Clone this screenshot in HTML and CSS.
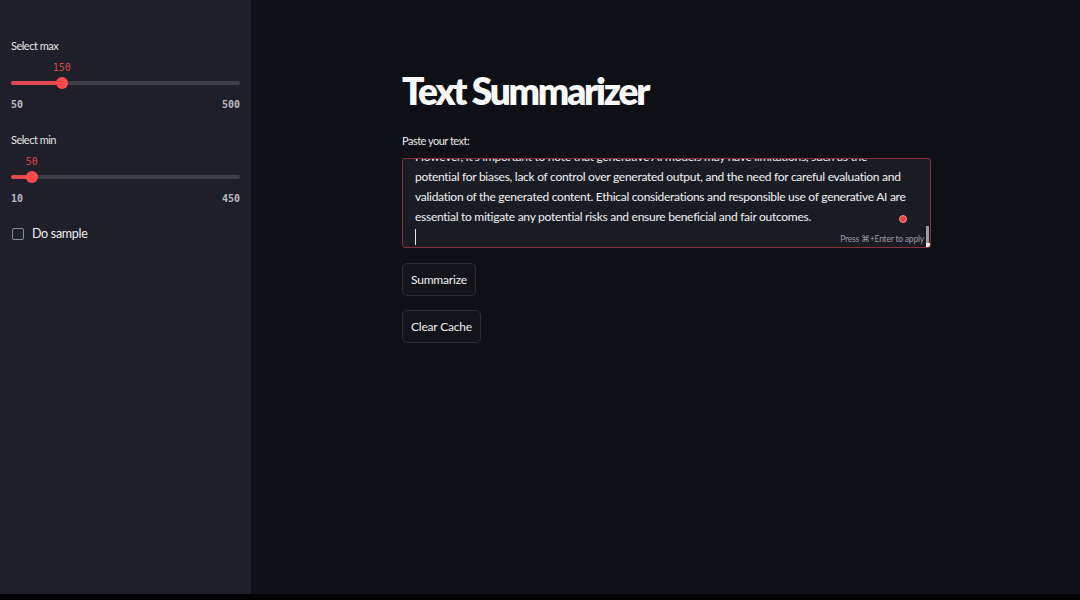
FILE: index.html
```html
<!DOCTYPE html>
<html>
<head>
<meta charset="utf-8">
<link rel="stylesheet" href="styles.css">
</head>
<body>
<div class="app">
  <aside class="sidebar">
    <div class="slider-block">
      <div class="label">Select max</div>
      <div class="slider">
        <div class="track"><div class="fill" style="width:22.2%"></div></div>
        <div class="thumb" style="left:22.2%"><span class="val">150</span></div>
      </div>
      <div class="range"><span>50</span><span>500</span></div>
    </div>
    <div class="slider-block">
      <div class="label">Select min</div>
      <div class="slider">
        <div class="track"><div class="fill" style="width:9.1%"></div></div>
        <div class="thumb" style="left:9.1%"><span class="val">50</span></div>
      </div>
      <div class="range"><span>10</span><span>450</span></div>
    </div>
    <label class="check"><span class="box"></span><span>Do sample</span></label>
  </aside>
  <main class="main">
    <div class="content">
      <h1 class="title">Text Summarizer</h1>
      <div class="label main-label">Paste your text:</div>
      <div class="textarea">
        <div class="text-scroll">
          <p class="text">However, it's important to note that generative AI models may have limitations, such as the potential for biases, lack of control over generated output, and the need for careful evaluation and validation of the generated content. Ethical considerations and responsible use of generative AI are essential to mitigate any potential risks and ensure beneficial and fair outcomes.</p>
          <div class="caret"></div>
        </div>
        <span class="dot"></span>
        <span class="hint">Press ⌘+Enter to apply</span>
        <span class="scrollbar"></span>
        <span class="resize"></span>
      </div>
      <button class="btn">Summarize</button>
      <button class="btn">Clear Cache</button>
    </div>
  </main>
</div>
</body>
</html>
```

FILE: styles.css
```css
html, body {
  margin: 0;
  padding: 0;
  background: #000;
}
body {
  width: 1080px;
  height: 600px;
  overflow: hidden;
  font-family: "Lato", "Open Sans", sans-serif;
  color: #fafafa;
}
.app {
  display: flex;
  height: 594px;
}
.sidebar {
  width: 251px;
  flex: none;
  background: #1f1f29;
  box-sizing: border-box;
  padding: 39px 11px 0 11px;
}
.label {
  font-size: 11px;
  letter-spacing: -0.5px;
  color: #e6e6e6;
  line-height: 14px;
}
.slider-block {
  margin-bottom: 23px;
}
.slider {
  position: relative;
  height: 16px;
  margin-top: 22px;
}
.track {
  position: absolute;
  left: 0;
  right: 0;
  top: 6px;
  height: 4px;
  border-radius: 2px;
  background: #3b3d47;
}
.fill {
  height: 100%;
  background: #e24a4e;
  border-radius: 2px;
}
.thumb {
  position: absolute;
  top: 2px;
  width: 12px;
  height: 12px;
  margin-left: -6px;
  border-radius: 50%;
  background: #ff4b4b;
}
.val {
  position: absolute;
  bottom: 16px;
  left: 50%;
  transform: translateX(-50%);
  font-family: "DejaVu Sans Mono", monospace;
  font-size: 10px;
  color: #d94a4a;
}
.range {
  display: flex;
  justify-content: space-between;
  font-family: "DejaVu Sans Mono", monospace;
  font-size: 10px;
  font-weight: bold;
  color: #b9bac0;
  margin-top: 8px;
}
.check {
  display: flex;
  align-items: center;
  gap: 8px;
  font-size: 12.5px;
  letter-spacing: -0.3px;
  color: #f0f0f0;
  margin-top: -1px;
  padding-left: 1px;
}
.box {
  width: 10px;
  height: 10px;
  border: 1px solid #8b8c94;
  border-radius: 2px;
}
.main {
  flex: 1;
  background: #0e1016;
  display: flex;
  justify-content: center;
}
.content {
  width: 529px;
  padding-top: 68px;
  margin-left: 2px;
}
.title {
  margin: 0;
  font-size: 37px;
  font-weight: 800;
  letter-spacing: -2.2px;
  line-height: 46px;
  color: #fafafa;
}
.main-label {
  margin-top: 20px;
}
.textarea {
  position: relative;
  margin-top: 10px;
  height: 90px;
  box-sizing: border-box;
  border: 1px solid #8c2f3a;
  border-radius: 3px;
  background: #1a1c24;
  overflow: hidden;
}
.text-scroll {
  position: absolute;
  left: 12px;
  width: 496px;
  bottom: 2px;
}
.text {
  margin: 0;
  font-size: 12px;
  letter-spacing: -0.27px;
  line-height: 20px;
  color: #f2f2f2;
}
.caret {
  width: 1px;
  height: 16px;
  background: #e8e8e8;
  margin-top: 2px;
}
.dot {
  position: absolute;
  right: 23px;
  top: 56px;
  width: 6px;
  height: 6px;
  border-radius: 50%;
  background: #e8414c;
  border: 1px solid #ff8a8a;
}
.hint {
  position: absolute;
  right: 6px;
  bottom: 3px;
  font-size: 8.5px;
  letter-spacing: -0.2px;
  color: #9a9ba3;
}
.scrollbar {
  position: absolute;
  right: 1px;
  bottom: 4px;
  width: 3px;
  height: 17px;
  background: #9a9ba3;
}
.resize {
  position: absolute;
  right: 0;
  bottom: 0;
  width: 4px;
  height: 4px;
  background: #f0f0f0;
}
.btn {
  display: block;
  margin-top: 15px;
  height: 33px;
  padding: 0 8px;
  font-family: inherit;
  font-size: 12px;
  letter-spacing: -0.2px;
  color: #f0f0f0;
  background: #12141a;
  border: 1px solid #2a2c35;
  border-radius: 5px;
}
.btn + .btn {
  margin-top: 14px;
}
```
